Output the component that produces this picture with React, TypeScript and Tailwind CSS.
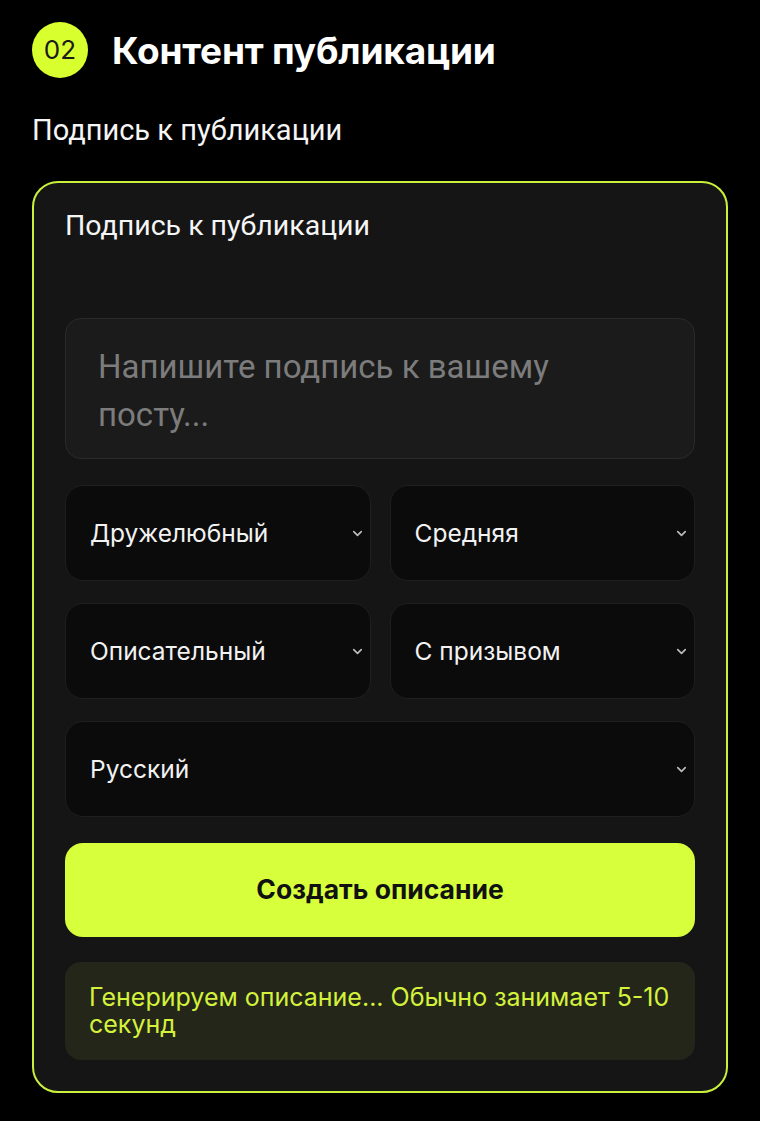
import { ChevronDown } from "lucide-react";

const selects = [
  ["Дружелюбный", "Средняя"],
  ["Описательный", "С призывом"],
];

function Select({ label }: { label: string }) {
  return (
    <div className="flex h-[96px] items-center justify-between rounded-[18px] border border-[#1f1f1f] bg-[#0b0b0b] pl-[24px] pr-[5px]">
      <span className="text-[24.5px] text-[#f2f2f2] [font-family:Inter,'Noto_Sans',sans-serif]">{label}</span>
      <ChevronDown className="h-[15px] w-[15px] text-[#bdbdbd]" strokeWidth={2.6} />
    </div>
  );
}

export default function App() {
  return (
    <main className="min-h-[1121px] w-[760px] bg-black px-[32px] pt-[22px] text-white [font-family:Roboto,'Liberation_Sans',sans-serif]">
      <div className="flex items-center gap-[24px]">
        <div className="flex h-[56px] w-[56px] shrink-0 items-center justify-center rounded-full bg-[#d8ff2e] text-[26px] leading-none text-[#1a1a1a] [font-family:Inter,sans-serif]">
          02
        </div>
        <h1 className="text-[37px] font-bold leading-none tracking-[-0.2px] [font-family:Inter,'Noto_Sans',sans-serif]">
          Контент публикации
        </h1>
      </div>

      <p className="mt-[34px] text-[29px] leading-[36px] text-[#f5f5f5]">Подпись к публикации</p>

      <section className="mt-[33px] w-[696px] rounded-[26px] border-2 border-[#c9f03a] bg-[#151515] px-[31px] pb-[31px] pt-[27px]">
        <p className="text-[28.5px] leading-[32px] text-[#f5f5f5]">Подпись к публикации</p>

        <div className="mt-[76px] h-[141px] rounded-[16px] border border-[#2a2a2a] bg-[#1b1b1b] px-[32px] pt-[24px] text-[33px] leading-[48px] text-[#7c7c7c]">
          Напишите подпись к вашему
          <br />
          посту...
        </div>

        <div className="mt-[26px] flex flex-col gap-[22px]">
          {selects.map((row) => (
            <div key={row[0]} className="grid grid-cols-2 gap-[19px]">
              {row.map((l) => (
                <Select key={l} label={l} />
              ))}
            </div>
          ))}
          <Select label="Русский" />
        </div>

        <button className="mt-[26px] flex h-[94px] w-full items-center justify-center rounded-[18px] bg-[#d8ff3c] text-[26.5px] font-bold text-[#111] [font-family:Inter,'Noto_Sans',sans-serif]">
          Создать описание
        </button>

        <div className="mt-[25px] rounded-[16px] bg-[#24261a] px-[24px] pb-[22px] pt-[22px] text-[25px] leading-[27px] text-[#d4f23c] [font-family:Inter,'Noto_Sans',sans-serif]">
          Генерируем описание... Обычно занимает 5-10 секунд
        </div>
      </section>
    </main>
  );
}
